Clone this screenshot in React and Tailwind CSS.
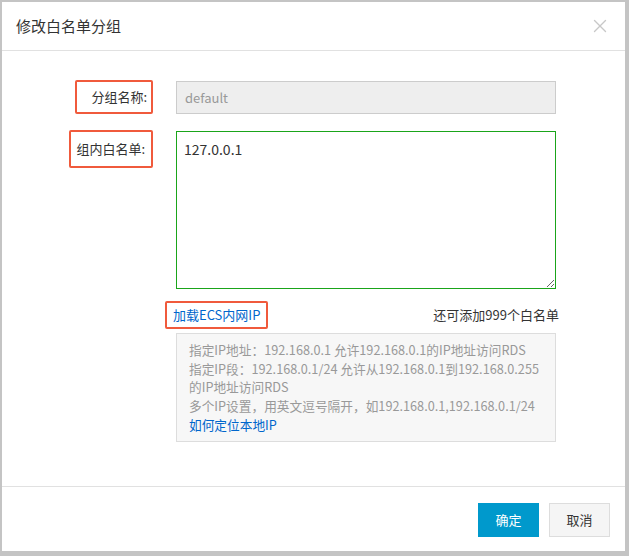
import { X } from 'lucide-react'

export default function App() {
  return (
    <div
      className="w-[629px] h-[556px] bg-[#c4c4c4] pl-[2px] pt-[2px] pr-[4px] pb-[5px]"
      style={{ fontFamily: '"Noto Sans CJK SC", "Liberation Sans", sans-serif' }}
    >
      <div className="bg-white h-full flex flex-col">
        {/* Header */}
        <div className="h-[49px] flex items-center justify-between pl-[14px] pr-[14px] border-b border-[#e1e1e1]">
          <span className="text-[15px] leading-[20px] text-[#333]">修改白名单分组</span>
          <X size={22} strokeWidth={1.5} className="text-[#c8c8c8]" />
        </div>

        {/* Body */}
        <div className="flex-1 pt-[29px] pr-[66px] text-[13px] leading-[18px]">
          <div className="flex items-center">
            <div className="w-[174px] flex justify-end pr-[23px]">
              <span className="border-2 border-[#f05a3c] rounded-[2px] pl-[14px] pr-[4px] py-[6px] text-[#333] whitespace-nowrap">分组名称:</span>
            </div>
            <input
              className="w-[380px] h-[33px] bg-[#eee] border border-[#ccc] px-[8px] text-[#999] text-[13px] outline-none"
              value="default"
              disabled
              readOnly
            />
          </div>

          <div className="flex items-start mt-[17px]">
            <div className="w-[174px] flex justify-end pr-[23px] -mt-[1px]">
              <span className="border-2 border-[#f05a3c] rounded-[2px] pl-[5px] pr-[6px] py-[8px] text-[#333] whitespace-nowrap">组内白名单:</span>
            </div>
            <textarea
              className="w-[380px] h-[158px] border border-[#1aa51a] px-[7px] py-[7px] text-[#333] text-[14px] leading-[20px] outline-none resize-y"
              defaultValue="127.0.0.1"
            />
          </div>

          <div className="flex items-center justify-between mt-[12px] pl-[163px]">
            <span className="border-2 border-[#f05a3c] rounded-[2px] px-[6px] py-[3px] text-[#0066cc] whitespace-nowrap">加载ECS内网IP</span>
            <span className="text-[#333]">还可添加999个白名单</span>
          </div>

          <div className="ml-[174px] mt-[4px] w-[380px] bg-[#f7f7f7] border border-[#ddd] pl-[12px] pr-[8px] pt-[7px] pb-[6px] text-[#999] text-[12.7px] leading-[18.7px]">
            <div>指定IP地址：192.168.0.1 允许192.168.0.1的IP地址访问RDS</div>
            <div>指定IP段：192.168.0.1/24 允许从192.168.0.1到192.168.0.255的IP地址访问RDS</div>
            <div>多个IP设置，用英文逗号隔开，如192.168.0.1,192.168.0.1/24</div>
            <div className="text-[#0066cc]">如何定位本地IP</div>
          </div>
        </div>

        {/* Footer */}
        <div className="h-[65px] border-t border-[#e1e1e1] flex items-center justify-end gap-[10px] pr-[15px] pt-[1px]">
          <button className="w-[61px] h-[34px] bg-[#0099cc] text-white text-[13px]">确定</button>
          <button className="w-[61px] h-[34px] bg-[#f5f5f5] border border-[#ddd] text-[#333] text-[13px]">取消</button>
        </div>
      </div>
    </div>
  )
}
